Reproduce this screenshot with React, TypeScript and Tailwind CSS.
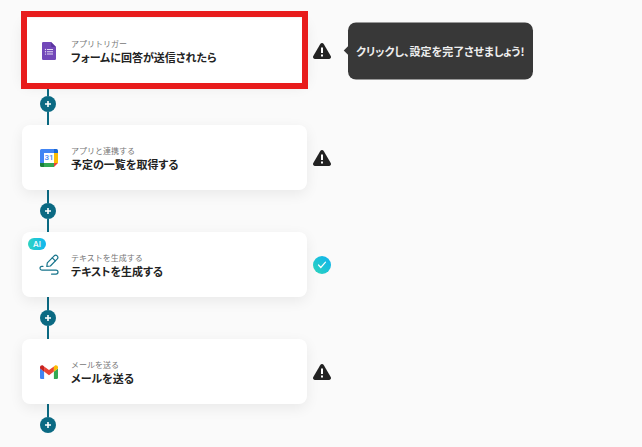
import {Fragment} from 'react';
import type {ReactNode} from 'react';

interface Step {
    id: number;
    label: string;
    title: string;
    icon: ReactNode;
    status: 'warning' | 'done';
    ai?: boolean;
    active?: boolean;
    hint?: string;
}

function FormsIcon() {
    return (
        <svg viewBox="0 0 14 18" className="h-[18px] w-[14px]" aria-hidden="true">
            <path d="M1.3 0H9l5 5v11.7a1.3 1.3 0 0 1-1.3 1.3H1.3A1.3 1.3 0 0 1 0 16.7V1.3A1.3 1.3 0 0 1 1.3 0z" fill="#7248b9"/>
            <path d="M9 0l5 5h-3.7A1.3 1.3 0 0 1 9 3.7z" fill="#5b35a0"/>
            <g fill="#e3d9f3">
                <path d="M5 7h6v1H5zM5 9.300h6v1H5zM5 11.600h6v1H5z"/>
                <circle cx="3.500" cy="7.500" r=".7"/>
                <circle cx="3.500" cy="9.800" r=".7"/>
                <circle cx="3.500" cy="12.100" r=".7"/>
            </g>
        </svg>
    );
}

function CalendarIcon() {
    return (
        <div className="relative h-[18px] w-[18px]">
            <svg viewBox="0 0 18 18" className="h-full w-full" aria-hidden="true">
                <path d="M4 4h10v10H4z" fill="#fff"/>
                <path d="M1.5 0H14v4H4v10H0V1.5A1.5 1.5 0 0 1 1.5 0z" fill="#4285f4"/>
                <path d="M14 0h2.5A1.5 1.5 0 0 1 18 1.5V4h-4z" fill="#1967d2"/>
                <path d="M14 4h4v10h-4z" fill="#fbbc04"/>
                <path d="M4 14h10v4H4z" fill="#34a853"/>
                <path d="M0 14h4v4H1.5A1.5 1.5 0 0 1 0 16.5z" fill="#188038"/>
                <path d="M14 14h4l-4 4z" fill="#ea4335"/>
            </svg>
            <span className="absolute inset-0 flex items-center justify-center font-['Roboto',sans-serif] text-[8px] leading-none font-medium text-[#4285f4]">
                31
            </span>
        </div>
    );
}

function WriteIcon() {
    return (
        <svg
            viewBox="0 0 20 22"
            className="h-[22px] w-5"
            fill="none"
            stroke="#17748c"
            strokeWidth="1.2"
            strokeLinecap="round"
            strokeLinejoin="round"
            aria-hidden="true"
        >
            <path d="M7.800 12.500l.5-3.700 6.900-7a2.200 2.200 0 0 1 3.100 3.100L11.400 12z"/>
            <path d="M13.300 3.800l3 3"/>
            <path d="M4 12.300H2.900a1.900 1.900 0 0 0 0 3.800H17a2 2 0 0 1 0 4h-4.500"/>
        </svg>
    );
}

function GmailIcon() {
    return (
        <svg viewBox="0 0 18 14" className="h-[14px] w-[18px]" aria-hidden="true">
            <path d="M0 3.500L4.100 6.500V14H1.300A1.300 1.300 0 0 1 0 12.700z" fill="#4285f4"/>
            <path d="M18 3.500L13.900 6.500V14h2.800a1.300 1.300 0 0 0 1.300-1.300z" fill="#34a853"/>
            <path d="M4.100 1.400L9 5.100l4.900-3.700v5.200L9 10.300 4.100 6.600z" fill="#ea4335"/>
            <path d="M13.900 1.400l.8-.6C16 -.2 18 .6 18 2.300v1.300l-4.100 3.100z" fill="#fbbc04"/>
            <path d="M4.100 1.400L3.300.8C2-.2 0 .6 0 2.300v1.300l4.100 3.100z" fill="#c5221f"/>
        </svg>
    );
}

function WarningIcon() {
    return (
        <svg viewBox="0 0 18 16" className="h-4 w-[18px]" role="img" aria-label="設定が未完了">
            <path d="M7.300 1a2 2 0 0 1 3.400 0l7 12a2 2 0 0 1-1.700 3H2a2 2 0 0 1-1.700-3z" fill="#222"/>
            <path d="M8 4.500h2v5.500H8zM8 11.500h2v2H8z" fill="#fff"/>
        </svg>
    );
}

function DoneIcon() {
    return (
        <div
            role="img"
            aria-label="設定済み"
            className="flex h-[18px] w-[18px] items-center justify-center rounded-full bg-linear-to-tr from-[#2fd5b8] to-[#12b0f0]"
        >
            <svg viewBox="0 0 10 8" className="h-2 w-2.5" fill="none" stroke="#fff" strokeWidth="1.2" strokeLinecap="round">
                <path d="M1.500 4l2.300 2.500L8.500 1.200"/>
            </svg>
        </div>
    );
}

const steps: Step[] = [
    {
        id: 1,
        label: 'アプリトリガー',
        title: 'フォームに回答が送信されたら',
        icon: <FormsIcon/>,
        status: 'warning',
        active: true,
        hint: 'クリックし、設定を完了させましょう!',
    },
    {id: 2, label: 'アプリと連携する', title: '予定の一覧を取得する', icon: <CalendarIcon/>, status: 'warning'},
    {id: 3, label: 'テキストを生成する', title: 'テキストを生成する', icon: <WriteIcon/>, status: 'done', ai: true},
    {id: 4, label: 'メールを送る', title: 'メールを送る', icon: <GmailIcon/>, status: 'warning'},
];

function StepCard({step}: {step: Step}) {
    return (
        <div className="flex items-center gap-1.5">
            <div className="relative flex min-h-[65px] w-full max-w-[285px] items-center gap-3 rounded-lg bg-white px-[17px] shadow-[0_4px_14px_rgba(0,0,0,0.07)]">
                {step.active && (
                    <div className="absolute -inset-x-px -top-[7px] -bottom-1.5 z-10 border-6 border-[#e81c1c]"></div>
                )}
                {step.ai && (
                    <span className="absolute top-1.5 left-1.5 rounded-full bg-linear-to-r from-[#2fd3c0] to-[#12b5f0] px-[5px] font-['Inter',sans-serif] text-[8px] leading-3 font-medium text-white">
                        AI
                    </span>
                )}
                <div className="flex w-5 shrink-0 justify-center">{step.icon}</div>
                <div>
                    <p className="text-[8px] leading-3 text-[#777]">{step.label}</p>
                    <h2 className="text-[11px] leading-[14px] font-bold text-[#222] [font-feature-settings:'palt']">
                        {step.title}
                    </h2>
                </div>
            </div>
            <div className="relative shrink-0">
                {step.status === 'done' ? <DoneIcon/> : <WarningIcon/>}
                {step.hint && (
                    <div
                        role="tooltip"
                        className="absolute top-1/2 left-full ml-[17px] -translate-y-1/2 rounded-lg bg-[#383838] px-2 py-5 text-[11px] leading-[17px] font-bold whitespace-nowrap text-[#eee] [font-feature-settings:'palt']"
                    >
                        <span className="absolute top-1/2 -left-[3px] h-1.5 w-1.5 -translate-y-1/2 rotate-45 bg-[#383838]"></span>
                        {step.hint}
                    </div>
                )}
            </div>
        </div>
    );
}

function AddStep({last}: {last: boolean}) {
    return (
        <div className="ml-[18px] flex w-4 flex-col items-center">
            <div className="h-[13px] w-0.5 bg-[#0b6a83]"></div>
            <button
                type="button"
                aria-label="ステップを追加"
                className="flex h-4 w-4 items-center justify-center rounded-full bg-[#0b6a83]"
            >
                <svg viewBox="0 0 6 6" className="h-1.5 w-1.5" stroke="#fff" strokeWidth="1.6">
                    <path d="M3 0v6M0 3h6"/>
                </svg>
            </button>
            {!last && <div className="h-[13px] w-0.5 bg-[#0b6a83]"></div>}
        </div>
    );
}

export default function App() {
    return (
        <main className="min-h-screen bg-[#fafafa] px-[22px] pt-[18px] font-['Noto_Sans_CJK_JP',sans-serif]">
            {steps.map((step, index) => (
                <Fragment key={step.id}>
                    <StepCard step={step}/>
                    <AddStep last={index === steps.length - 1}/>
                </Fragment>
            ))}
        </main>
    );
}
